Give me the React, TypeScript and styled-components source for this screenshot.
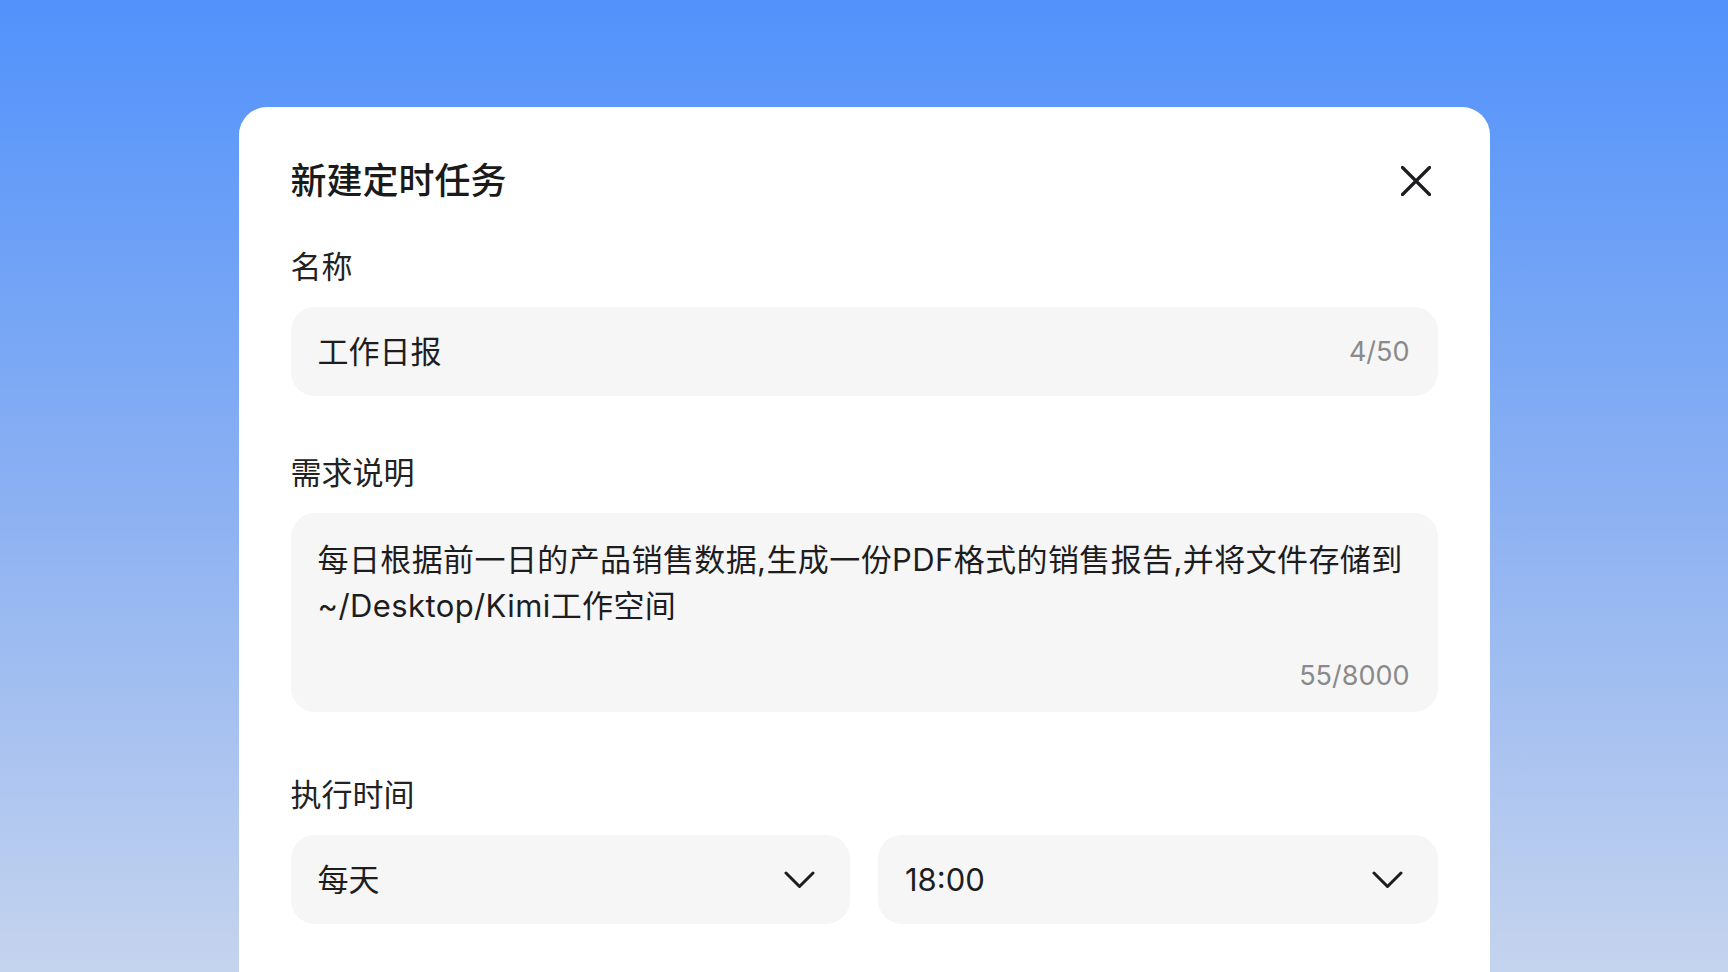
import React from 'react';
import styled, { createGlobalStyle } from 'styled-components';

const GlobalStyle = createGlobalStyle`
  html, body {
    margin: 0;
    padding: 0;
  }
  body {
    font-family: Inter, "Noto Sans CJK SC", sans-serif;
    color: #1d1d1f;
  }
`;

const CloseIcon = () => (
  <svg width="30" height="30" viewBox="0 0 30 30" fill="none">
    <path d="M1.5 1.5 L28.5 28.5 M28.5 1.5 L1.5 28.5" stroke="#1d1d1f" strokeWidth="3.2" strokeLinecap="round" />
  </svg>
);

const Chevron = () => (
  <svg width="31" height="18" viewBox="0 0 31 18" fill="none">
    <path d="M2 2 L15.5 15.5 L29 2" stroke="#1d1d1f" strokeWidth="3" strokeLinecap="round" strokeLinejoin="round" />
  </svg>
);

export default function App() {
  return (
    <Page>
      <GlobalStyle />
      <Card>
        <Header>
          <Title>新建定时任务</Title>
          <CloseButton type="button" aria-label="关闭">
            <CloseIcon />
          </CloseButton>
        </Header>

        <Field $top={39}>
          <Label>名称</Label>
          <Input>
            <Value>工作日报</Value>
            <Counter>4/50</Counter>
          </Input>
        </Field>

        <Field $top={55}>
          <Label>需求说明</Label>
          <TextArea>
            <Paragraph>
              每日根据前一日的产品销售数据,生成一份PDF格式的销售报告,并将文件存储到~/Desktop/Kimi工作空间
            </Paragraph>
            <Counter>55/8000</Counter>
          </TextArea>
        </Field>

        <Field $top={61}>
          <Label>执行时间</Label>
          <SelectRow>
            <Select>
              <Value>每天</Value>
              <Chevron />
            </Select>
            <Select>
              <Value>18:00</Value>
              <Chevron />
            </Select>
          </SelectRow>
        </Field>
      </Card>
    </Page>
  );
}

const Page = styled.div`
  height: 100vh;
  overflow: hidden;
  box-sizing: border-box;
  padding-top: 107px;
  background: linear-gradient(180deg, #5192fb 0%, #8cb1f2 52%, #c5d4ee 100%);
`;

const Card = styled.div`
  width: 1251px;
  height: calc(100vh - 107px);
  margin: 0 auto;
  box-sizing: border-box;
  padding: 49px 52px 0;
  background: #ffffff;
  border-radius: 28px 28px 0 0;
`;

const Header = styled.div`
  display: flex;
  align-items: center;
  justify-content: space-between;
  height: 50px;
`;

const Title = styled.h1`
  margin: 0;
  font-size: 36px;
  line-height: 50px;
  font-weight: 500;
  color: #1a1a1a;
`;

const CloseButton = styled.button`
  display: flex;
  align-items: center;
  justify-content: center;
  width: 44px;
  height: 44px;
  padding: 0;
  border: none;
  background: transparent;
  cursor: pointer;
`;

const Field = styled.div<{ $top: number }>`
  display: flex;
  flex-direction: column;
  gap: 18px;
  margin-top: ${p => p.$top}px;
`;

const Label = styled.div`
  font-size: 31px;
  line-height: 44px;
  color: #222;
`;

const Input = styled.div`
  display: flex;
  align-items: center;
  justify-content: space-between;
  height: 89px;
  box-sizing: border-box;
  padding: 0 28px 0 27px;
  background: #f6f6f6;
  border-radius: 24px;
`;

const Value = styled.span`
  font-size: 31px;
  line-height: 44px;
  color: #1d1d1f;
`;

const Counter = styled.span`
  font-size: 27px;
  line-height: 40px;
  color: #8a8a8a;
`;

const TextArea = styled.div`
  display: flex;
  flex-direction: column;
  height: 199px;
  box-sizing: border-box;
  padding: 24px 28px 16px 27px;
  background: #f6f6f6;
  border-radius: 24px;

  ${Counter} {
    margin-top: auto;
    align-self: flex-end;
  }
`;

const Paragraph = styled.p`
  margin: 0;
  font-size: 31px;
  line-height: 46px;
  letter-spacing: 0.4px;
  color: #1d1d1f;
`;

const SelectRow = styled.div`
  display: grid;
  grid-template-columns: 1fr 1fr;
  gap: 28px;
`;

const Select = styled.div`
  display: flex;
  align-items: center;
  justify-content: space-between;
  height: 89px;
  box-sizing: border-box;
  padding: 0 35px 0 27px;
  background: #f6f6f6;
  border-radius: 24px;
  cursor: pointer;
`;
